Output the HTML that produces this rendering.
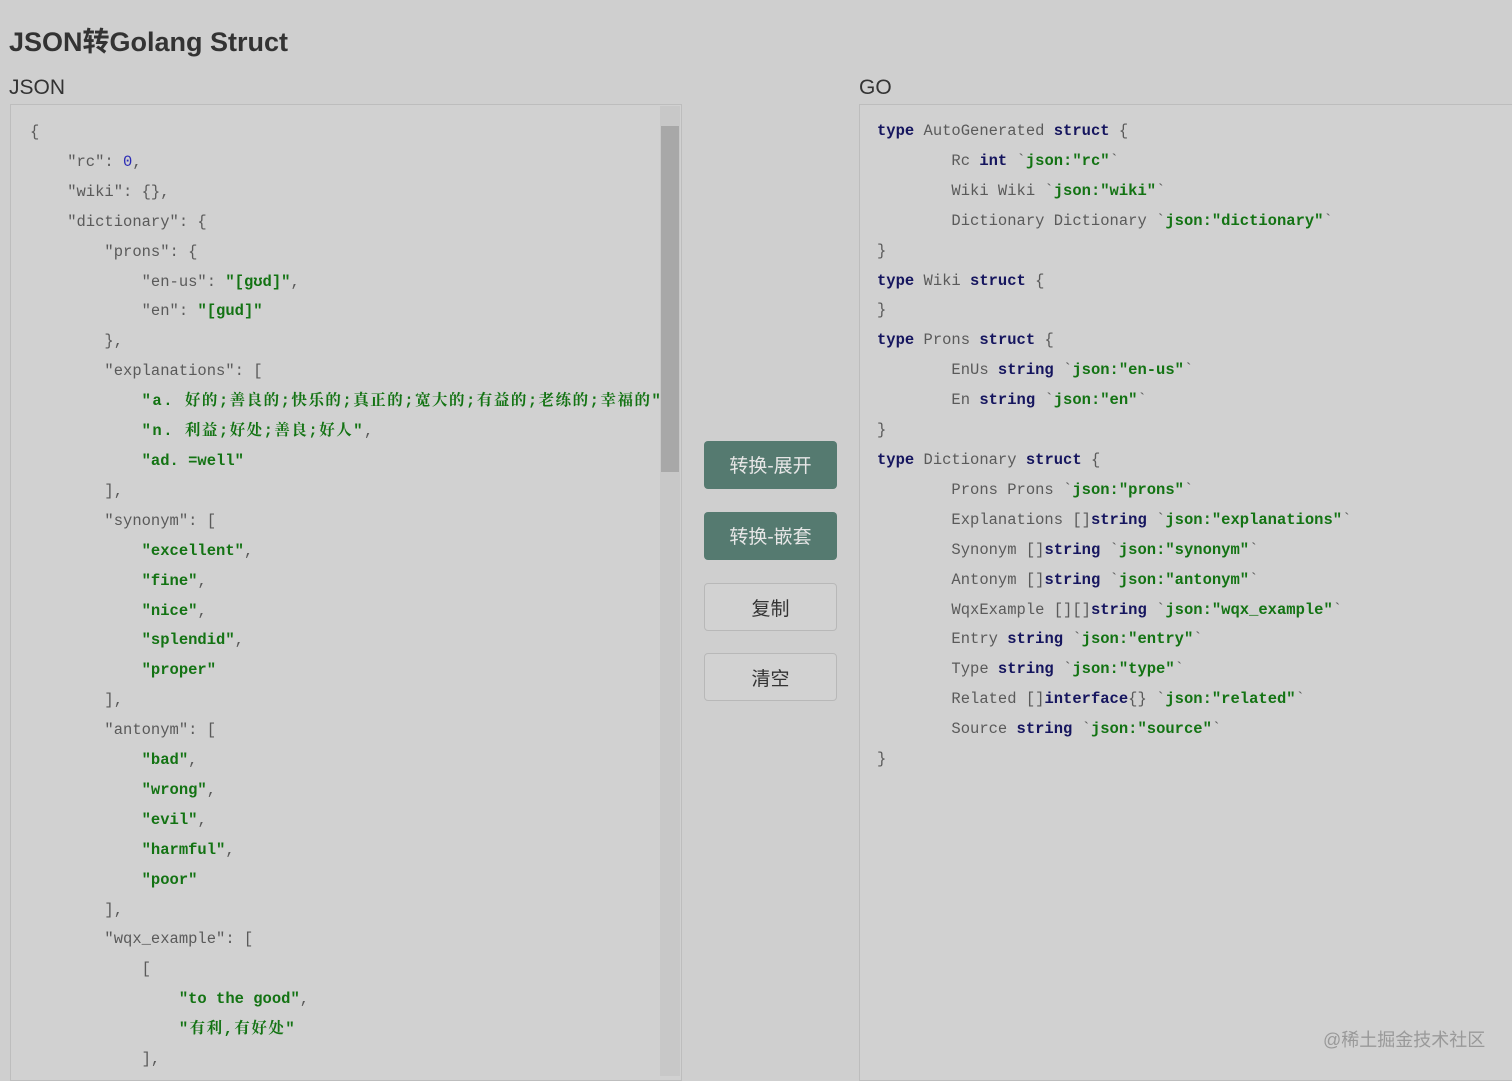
<!DOCTYPE html>
<html><head><meta charset="utf-8"><style>
body{margin:0;background:#cfcfcf;width:1512px;height:1076px;overflow:hidden;font-family:"Liberation Sans","Noto Sans CJK SC",sans-serif;position:relative}
h1{position:absolute;left:9px;top:20px;margin:0;font-size:27px;font-weight:bold;color:#333}
.lbl{position:absolute;top:76px;font-size:21px;color:#333}
.box{position:absolute;top:104px;bottom:-5px;border:1px solid #bdbdbd;background:#d1d1d1;overflow:hidden}
pre{margin:0;font-family:"Liberation Mono","Noto Serif CJK SC",monospace;font-size:15.5px;line-height:29.9px;color:#5a5a5a;white-space:pre}
.s{color:#137313;font-weight:bold}.k{color:#15155e;font-weight:bold}.n{color:#2b2bb5}
.c{letter-spacing:1.5px}
.sb{position:absolute;left:660px;top:106px;width:20px;bottom:0;background:#c8c8c8}
.th{position:absolute;left:661px;top:126px;width:18px;height:346px;background:#a8a8a8}
.btn{position:absolute;left:704px;width:133px;height:48px;border-radius:4px;font-size:19px;text-align:center;line-height:52px;box-sizing:border-box}
.g{background:#557a70;color:#e6e6e6}
.w{border:1px solid #b8b8b8;color:#333;background:#d2d2d2}
</style></head><body>
<h1>JSON转Golang Struct</h1>
<div class="lbl" style="left:9px">JSON</div>
<div class="lbl" style="left:859px">GO</div>
<div class="box" style="left:10px;width:670px">
<pre style="padding:13px 0 0 19px">{
    "rc": <span class="n">0</span>,
    "wiki": {},
    "dictionary": {
        "prons": {
            "en-us": <span class="s">"[gʊd]"</span>,
            "en": <span class="s">"[gud]"</span>
        },
        "explanations": [
            <span class="s c">"a. 好的;善良的;快乐的;真正的;宽大的;有益的;老练的;幸福的"</span>,
            <span class="s c">"n. 利益;好处;善良;好人"</span>,
            <span class="s">"ad. =well"</span>
        ],
        "synonym": [
            <span class="s">"excellent"</span>,
            <span class="s">"fine"</span>,
            <span class="s">"nice"</span>,
            <span class="s">"splendid"</span>,
            <span class="s">"proper"</span>
        ],
        "antonym": [
            <span class="s">"bad"</span>,
            <span class="s">"wrong"</span>,
            <span class="s">"evil"</span>,
            <span class="s">"harmful"</span>,
            <span class="s">"poor"</span>
        ],
        "wqx_example": [
            [
                <span class="s">"to the good"</span>,
                <span class="s c">"有利,有好处"</span>
            ],
</pre></div>
<div class="sb"></div><div class="th"></div>
<div class="btn g" style="top:441px">转换-展开</div>
<div class="btn g" style="top:512px">转换-嵌套</div>
<div class="btn w" style="top:583px">复制</div>
<div class="btn w" style="top:653px">清空</div>
<div class="box" style="left:859px;width:670px">
<pre style="padding:12px 0 0 17px"><span class="k">type</span> AutoGenerated <span class="k">struct</span> {
        Rc <span class="k">int</span> `<span class="s">json:"rc"</span>`
        Wiki Wiki `<span class="s">json:"wiki"</span>`
        Dictionary Dictionary `<span class="s">json:"dictionary"</span>`
}
<span class="k">type</span> Wiki <span class="k">struct</span> {
}
<span class="k">type</span> Prons <span class="k">struct</span> {
        EnUs <span class="k">string</span> `<span class="s">json:"en-us"</span>`
        En <span class="k">string</span> `<span class="s">json:"en"</span>`
}
<span class="k">type</span> Dictionary <span class="k">struct</span> {
        Prons Prons `<span class="s">json:"prons"</span>`
        Explanations []<span class="k">string</span> `<span class="s">json:"explanations"</span>`
        Synonym []<span class="k">string</span> `<span class="s">json:"synonym"</span>`
        Antonym []<span class="k">string</span> `<span class="s">json:"antonym"</span>`
        WqxExample [][]<span class="k">string</span> `<span class="s">json:"wqx_example"</span>`
        Entry <span class="k">string</span> `<span class="s">json:"entry"</span>`
        Type <span class="k">string</span> `<span class="s">json:"type"</span>`
        Related []<span class="k">interface</span>{} `<span class="s">json:"related"</span>`
        Source <span class="k">string</span> `<span class="s">json:"source"</span>`
}</pre></div>
<div style="position:absolute;left:1323px;top:1026px;font-size:18px;color:#999">@稀土掘金技术社区</div>
</body></html>
